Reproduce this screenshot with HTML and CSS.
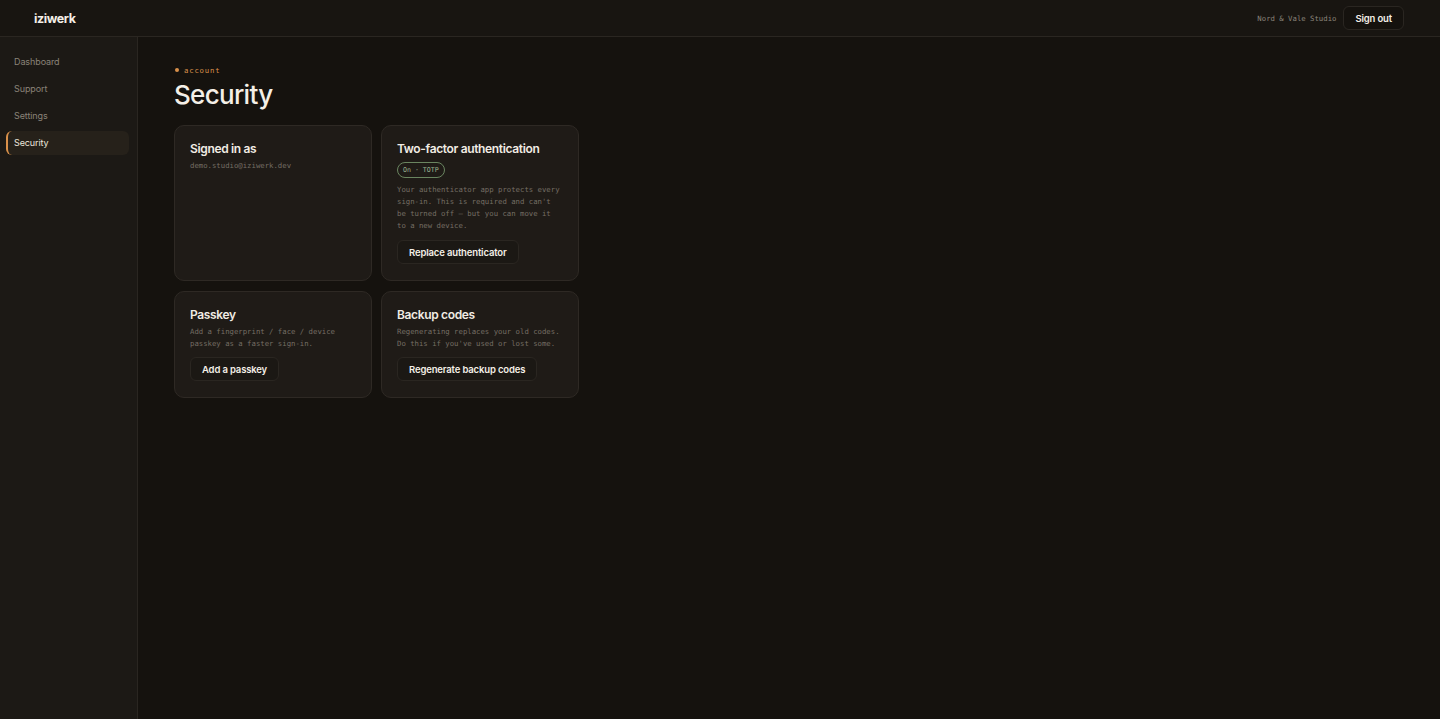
FILE: index.html
```html
<!DOCTYPE html>
<html lang="en">
<head>
  <meta charset="UTF-8">
  <title>iziwerk - Security</title>
  <link rel="stylesheet" href="styles.css">
</head>
<body>

<header class="topbar">
  <div class="logo">iziwerk</div>
  <div class="topbar-right">
    <span class="org">Nord &amp; Vale Studio</span>
    <button type="button" class="btn btn-small">Sign out</button>
  </div>
</header>

<div class="layout">
  <nav class="sidebar">
    <a class="nav-item" href="#">Dashboard</a>
    <a class="nav-item" href="#">Support</a>
    <a class="nav-item" href="#">Settings</a>
    <a class="nav-item active" href="#">Security</a>
  </nav>

  <main class="content">
    <div class="eyebrow"><span class="dot"></span>account</div>
    <h1>Security</h1>

    <div class="cards">
      <section class="card">
        <h2>Signed in as</h2>
        <p class="muted">demo.studio@iziwerk.dev</p>
      </section>

      <section class="card">
        <h2>Two-factor authentication</h2>
        <span class="badge">On · TOTP</span>
        <p class="muted para">Your authenticator app protects every sign-in. This is required and can't be turned off — but you can move it to a new device.</p>
        <button type="button" class="btn">Replace authenticator</button>
      </section>

      <section class="card">
        <h2>Passkey</h2>
        <p class="muted">Add a fingerprint / face / device passkey as a faster sign-in.</p>
        <button type="button" class="btn">Add a passkey</button>
      </section>

      <section class="card">
        <h2>Backup codes</h2>
        <p class="muted">Regenerating replaces your old codes. Do this if you've used or lost some.</p>
        <button type="button" class="btn">Regenerate backup codes</button>
      </section>
    </div>
  </main>
</div>

</body>
</html>
```

FILE: styles.css
```css
* {
  box-sizing: border-box;
}
html, body {
  height: 100%;
}
body {
  margin: 0;
  background: #15120e;
  color: #f1ece4;
  font-family: Inter, "Noto Sans", sans-serif;
  display: flex;
  flex-direction: column;
}
.topbar {
  height: 37px;
  flex: none;
  display: flex;
  align-items: center;
  justify-content: space-between;
  padding: 0 36px 0 34px;
  background: #181511;
  border-bottom: 1px solid #2a2621;
}
.logo {
  font-weight: 700;
  font-size: 12.5px;
  letter-spacing: -0.4px;
  color: #f4efe7;
}
.topbar-right {
  display: flex;
  align-items: center;
  gap: 7px;
}
.org {
  font-family: "DejaVu Sans Mono", "Liberation Mono", monospace;
  font-size: 7.3px;
  color: #8a847a;
}
.layout {
  flex: 1;
  display: flex;
}
.sidebar {
  width: 138px;
  flex: none;
  background: #1c1915;
  border-right: 1px solid #2a2621;
  padding: 13px 8px 0 6px;
  display: flex;
  flex-direction: column;
  gap: 3px;
}
.nav-item {
  display: block;
  height: 24px;
  line-height: 24px;
  padding-left: 6px;
  font-size: 9px;
  letter-spacing: -0.1px;
  color: #8a8378;
  text-decoration: none;
  border-radius: 6px;
  border-left: 2px solid transparent;
}
.nav-item.active {
  background: #26211a;
  border-left-color: #d9904a;
  color: #ece6dc;
}
.content {
  flex: 1;
  padding: 28px 36px;
}
.eyebrow {
  display: flex;
  align-items: center;
  gap: 5px;
  font-family: "DejaVu Sans Mono", "Liberation Mono", monospace;
  font-size: 7.3px;
  letter-spacing: 0.8px;
  color: #d9904a;
  height: 10px;
}
.dot {
  width: 4px;
  height: 4px;
  border-radius: 50%;
  background: #d9904a;
  margin-left: 1px;
}
h1 {
  margin: 4px 0 14px;
  font-size: 26px;
  line-height: 32px;
  font-weight: 500;
  letter-spacing: -0.7px;
  color: #f4efe7;
}
.cards {
  display: grid;
  grid-template-columns: 198px 198px;
  gap: 10px 9px;
}
.card {
  background: #1f1b17;
  border: 1px solid #2e2924;
  border-radius: 10px;
  padding: 15px 15px 16px;
  display: flex;
  flex-direction: column;
  align-items: flex-start;
}
h2 {
  margin: 0 0 3px;
  font-size: 12px;
  line-height: 16px;
  font-weight: 600;
  letter-spacing: -0.35px;
  color: #f1ece4;
}
.muted {
  margin: 0;
  font-family: "DejaVu Sans Mono", "Liberation Mono", monospace;
  font-size: 7.3px;
  line-height: 11.5px;
  color: #756e64;
}
.para {
  line-height: 12px;
  margin-top: 6px;
}
.badge {
  margin-top: 2px;
  height: 16px;
  line-height: 14px;
  padding: 0 5px;
  border: 1px solid #6a8560;
  border-radius: 9px;
  font-family: "DejaVu Sans Mono", "Liberation Mono", monospace;
  font-size: 6.6px;
  color: #9db592;
}
.btn {
  margin-top: 8px;
  height: 24px;
  padding: 0 11px;
  background: #1b1814;
  border: 1px solid #2a2621;
  border-radius: 6px;
  color: #f4efe7;
  font-family: Inter, "Noto Sans", sans-serif;
  font-size: 9.5px;
  font-weight: 600;
  letter-spacing: -0.15px;
  cursor: pointer;
}
.btn-small {
  margin-top: 0;
  background: #15120e;
}
```
